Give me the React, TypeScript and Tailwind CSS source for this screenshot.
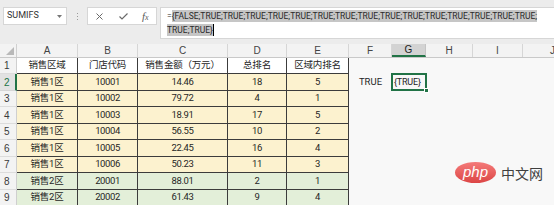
import React from "react";

const YEL = "bg-[#fcf2cf]";
const GRN = "bg-[#e3efd9]";

type Row = { n: number; h: string; bg: string; cells: string[] };

const rows: Row[] = [
  { n: 1, h: "h-[16px]", bg: "bg-white", cells: ["销售区域", "门店代码", "销售金额（万元）", "总排名", "区域内排名"] },
  { n: 2, h: "h-[17px]", bg: YEL, cells: ["销售1区", "10001", "14.46", "18", "5"] },
  { n: 3, h: "h-[16px]", bg: YEL, cells: ["销售1区", "10002", "79.72", "4", "1"] },
  { n: 4, h: "h-[17px]", bg: YEL, cells: ["销售1区", "10003", "18.91", "17", "5"] },
  { n: 5, h: "h-[16px]", bg: YEL, cells: ["销售1区", "10004", "56.55", "10", "2"] },
  { n: 6, h: "h-[17px]", bg: YEL, cells: ["销售1区", "10005", "22.45", "16", "4"] },
  { n: 7, h: "h-[16px]", bg: YEL, cells: ["销售1区", "10006", "50.23", "11", "3"] },
  { n: 8, h: "h-[17px]", bg: GRN, cells: ["销售2区", "20001", "88.01", "2", "1"] },
  { n: 9, h: "h-[16px]", bg: GRN, cells: ["销售2区", "20002", "61.43", "9", "4"] },
];

const dataW = ["w-[61px]", "w-[60px]", "w-[90px]", "w-[59px]", "w-[62px]"];

const letters = [
  { l: "A", w: "w-[61px]" },
  { l: "B", w: "w-[60px]" },
  { l: "C", w: "w-[90px]" },
  { l: "D", w: "w-[59px]" },
  { l: "E", w: "w-[62px]" },
  { l: "F", w: "w-[43px]" },
  { l: "G", w: "w-[34px]" },
  { l: "H", w: "w-[47px]" },
  { l: "I", w: "w-[50px]" },
  { l: "J", w: "w-[60px]" },
];

const TRUES = Array(15).fill("TRUE;").join("");

export default function App() {
  return (
    <div className="relative w-[554px] h-[205px] overflow-hidden bg-[#f8f8f8] font-['Roboto','Noto_Sans_CJK_SC',sans-serif] text-[#262626]">
      {/* Toolbar */}
      <div className="h-[44px] bg-[#ececec] flex items-start pt-[7px] pl-[3px] overflow-hidden">
        <div className="w-[64px] h-[18px] shrink-0 bg-white border border-[#d6d6d6] flex items-center justify-between pl-[3px] pr-[4px]">
          <span className="text-[9px] text-[#333]">SUMIFS</span>
          <svg width="5" height="3" viewBox="0 0 5 3"><path d="M0 0h5L2.5 3z" fill="#777" /></svg>
        </div>
        <div className="w-[20px] h-[18px] shrink-0 flex flex-col items-center justify-center gap-[2px]">
          <span className="w-[1px] h-[1px] bg-[#9a9a9a]" />
          <span className="w-[1px] h-[1px] bg-[#9a9a9a]" />
          <span className="w-[1px] h-[1px] bg-[#9a9a9a]" />
        </div>
        <div className="w-[70px] h-[18px] shrink-0 bg-white border border-[#d6d6d6] flex items-center">
          <svg className="ml-[8px]" width="7" height="7" viewBox="0 0 7 7"><path d="M0.5 0.5l6 6M6.5 0.5l-6 6" stroke="#6a6a6a" strokeWidth="1" /></svg>
          <svg className="ml-[16px]" width="9" height="7" viewBox="0 0 9 7"><path d="M0.5 3.5l2.5 2.5 5.5-5.5" stroke="#6a6a6a" strokeWidth="1.2" fill="none" /></svg>
          <span className="ml-[14px] text-[11px] italic text-[#5a5a5a] font-['Liberation_Serif',serif] leading-none">f<span className="text-[8px]">x</span></span>
        </div>
        <div className="ml-[3px] w-[420px] h-[32px] shrink-0 bg-white border border-[#d6d6d6] pl-[6px] pt-[1px] text-[8.5px] text-[#2a2a2a]">
          <div className="h-[14px] flex items-center whitespace-nowrap">
            <span>=</span>
            <span className="bg-[#c6c6c6] h-[12px] leading-[12px]">{"{FALSE;" + TRUES}</span>
          </div>
          <div className="h-[14px] flex items-center whitespace-nowrap">
            <span className="bg-[#c6c6c6] h-[12px] leading-[12px]">{"TRUE;TRUE}"}</span>
            <span className="w-[1px] h-[12px] bg-black" />
          </div>
        </div>
      </div>

      {/* Column headers */}
      <div className="flex h-[14px] bg-[#f3f3f3] border-b border-[#c9c9c9] text-[10px] text-[#444] font-['Liberation_Sans',sans-serif]">
        <div className="w-[17px] shrink-0 border-r border-[#d0d0d0] flex items-end justify-end pr-[2px] pb-[2px]">
          <svg width="8" height="8" viewBox="0 0 8 8"><path d="M8 0V8H0z" fill="#b9b9b9" /></svg>
        </div>
        {letters.map((c) =>
          c.l === "G" ? (
            <div key={c.l} className={`${c.w} shrink-0 flex items-center justify-center bg-[#d3d3d3] border-r border-[#c4c4c4] border-b-2 border-b-[#217346] text-[#1f1f1f]`}>
              {c.l}
            </div>
          ) : (
            <div key={c.l} className={`${c.w} shrink-0 flex items-center justify-center border-r border-[#d6d6d6]`}>
              {c.l}
            </div>
          )
        )}
      </div>

      {/* Rows */}
      {rows.map((r) => (
        <div key={r.n} className={`flex ${r.h}`}>
          {r.n === 2 ? (
            <div className="w-[17px] shrink-0 bg-[#e2e2e2] border-r-2 border-[#217346] border-b border-b-[#d6d6d6] flex items-center pl-[4px] text-[10px] text-[#217346] font-['Liberation_Sans',sans-serif]">
              {r.n}
            </div>
          ) : (
            <div className="w-[17px] shrink-0 bg-[#f3f3f3] border-r border-[#cfcfcf] border-b border-b-[#dcdcdc] flex items-center pl-[4px] text-[10px] text-[#3a3a3a] font-['Liberation_Sans',sans-serif]">
              {r.n}
            </div>
          )}
          {r.cells.map((c, i) => (
            <div
              key={i}
              className={`${dataW[i]} shrink-0 ${r.bg} border-r border-b border-[#3c3c3c] flex items-center justify-center text-[9.5px] ${i > 0 && r.n > 1 ? "tracking-[-0.4px]" : "tracking-[-0.2px]"}`}
            >
              {c}
            </div>
          ))}
          <div className="w-[43px] shrink-0 flex items-center justify-center text-[9.5px]">
            {r.n === 2 ? "TRUE" : ""}
          </div>
          <div className="relative w-[34px] shrink-0 flex items-center pl-[2px] text-[9px] tracking-[-0.2px]">
            {r.n === 2 && (
              <>
                <span>{"{TRUE}"}</span>
                <div className="absolute -left-[1px] -top-[1px] -right-[1px] bottom-0 border-2 border-[#217346]" />
                <div className="absolute -right-[3px] -bottom-[2px] w-[5px] h-[5px] bg-[#217346] border border-white" />
              </>
            )}
          </div>
          <div className="w-[47px] shrink-0" />
          <div className="w-[50px] shrink-0" />
          <div className="flex-1" />
        </div>
      ))}

      {/* watermark logo */}
      <div className="absolute left-[455px] top-[162px] flex items-center">
        <div className="w-[41px] h-[21px] rounded-[50%] bg-gradient-to-b from-[#f47a7a] to-[#dc4545] flex items-center justify-center">
          <span className="text-white italic text-[15px] leading-none font-['Liberation_Sans',sans-serif] -mt-[2px]">php</span>
        </div>
        <span className="ml-[5px] text-[14px] text-[#3f3f3f] font-['Noto_Sans_CJK_SC',sans-serif] leading-none">中文网</span>
      </div>
    </div>
  );
}
